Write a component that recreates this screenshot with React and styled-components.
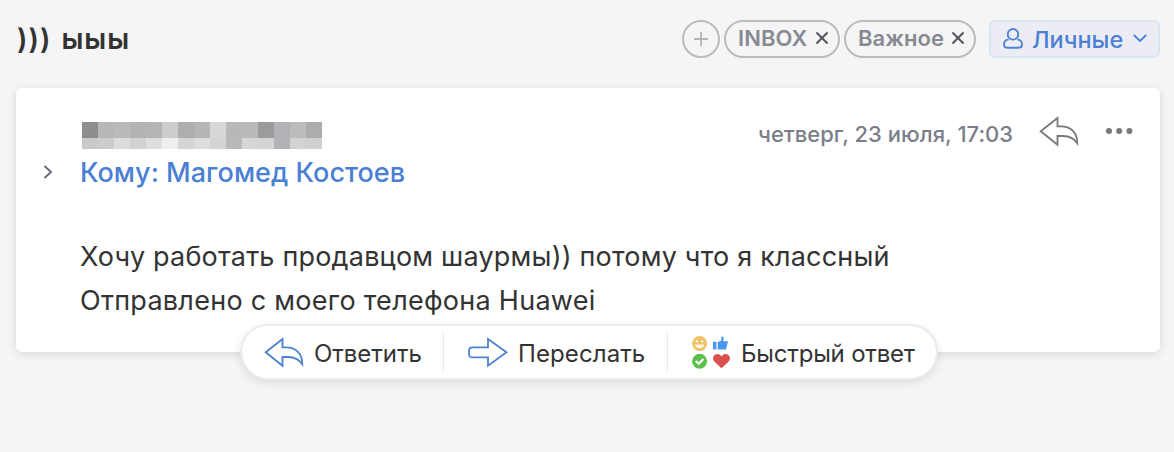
import React from "react";
import styled, { createGlobalStyle } from "styled-components";

const GlobalStyle = createGlobalStyle`
  * {
    box-sizing: border-box;
  }
  body {
    margin: 0;
    background: #f5f5f5;
    font-family: Inter, "Liberation Sans", sans-serif;
    color: #333;
  }
  svg {
    display: block;
    flex: none;
  }
`;

const Page = styled.div`
  height: 452px;
  padding: 0 14px 0 16px;
  overflow: hidden;
`;

const Header = styled.header`
  display: flex;
  align-items: flex-start;
  height: 88px;
  padding-top: 20px;
`;

const Title = styled.h1`
  flex: 1;
  margin: 0;
  padding-left: 1px;
  font-size: 28px;
  line-height: 38px;
  font-weight: 600;
  letter-spacing: 1px;
  word-spacing: 2px;
  white-space: nowrap;
`;

const Tag = styled.div`
  display: flex;
  align-items: center;
  justify-content: space-between;
  width: ${(p) => p.$width}px;
  height: 38px;
  margin-right: ${(p) => p.$gap || 4}px;
  padding: 0 9px 2px 12px;
  border: 2px solid #bbbcbf;
  border-radius: 19px;
`;

const TagLabel = styled.span`
  font-size: 22px;
  line-height: 30px;
  font-weight: 600;
  color: #878a93;
  letter-spacing: 0.1px;
  white-space: nowrap;
`;

const AddTag = styled.button`
  display: flex;
  align-items: center;
  justify-content: center;
  width: 38px;
  height: 38px;
  margin: 0 4px 0 0;
  padding: 0;
  border: 2px solid #bbbcbf;
  border-radius: 50%;
  background: none;
`;

const Category = styled.button`
  display: flex;
  align-items: center;
  width: 171px;
  height: 38px;
  padding: 0 11px 0 12px;
  border: 2px solid #dce4f1;
  border-radius: 6px;
  background: #ecedf4;
`;

const CategoryLabel = styled.span`
  flex: 1;
  padding: 2px 0 0 9px;
  text-align: left;
  font: 500 23.5px/34px Inter, sans-serif;
  color: #4d80d2;
  white-space: nowrap;
`;

const Card = styled.article`
  display: flex;
  height: 264px;
  width: 1144px;
  border-radius: 6px;
  background: #fff;
  box-shadow: 0 2px 8px rgba(0, 0, 0, 0.12);
`;

const Expander = styled.div`
  width: 64px;
  padding: 77px 0 0 27px;
`;

const Content = styled.div`
  flex: 1;
  padding-top: 34px;
`;

const Top = styled.div`
  display: flex;
  align-items: flex-start;
  height: 32px;
`;

const Mosaic = styled.div`
  display: grid;
  grid-template-columns: repeat(15, 16px);
  grid-template-rows: 16px 11px;
  flex: 1;
  padding-left: 2px;
`;

const Pixel = styled.i`
  background: ${(p) => p.$color};
`;

const DateText = styled.time`
  width: 281px;
  margin-top: -3px;
  font-size: 22px;
  line-height: 30px;
  font-weight: 500;
  color: #7a7e89;
  letter-spacing: 0.02px;
  white-space: nowrap;
`;

const ReplyTop = styled.div`
  width: 67px;
  margin-top: -6px;
`;

const More = styled.div`
  width: 54px;
  margin-top: 6px;
`;

const Recipient = styled.div`
  font-size: 27px;
  line-height: 38px;
  font-weight: 500;
  color: #4a7fd3;
  letter-spacing: 0.03px;
  white-space: nowrap;
`;

const Message = styled.div`
  padding-top: 43px;
`;

const Line = styled.p`
  margin: 0;
  font-size: 27px;
  line-height: 44px;
  letter-spacing: ${(p) => p.$spacing || 0}px;
  white-space: nowrap;
`;

const Actions = styled.div`
  position: relative;
  display: flex;
  align-items: center;
  width: 698px;
  height: 56px;
  margin: -28px 0 0 224px;
  border: 2px solid #ebebeb;
  border-radius: 28px;
  background: #fff;
  background-clip: padding-box;
  box-shadow: 0 3px 8px rgba(0, 0, 0, 0.1);
`;

const Action = styled.button`
  display: flex;
  align-items: center;
  width: ${(p) => p.$width}px;
  height: 40px;
  padding: 0 0 0 ${(p) => p.$left}px;
  border: 0;
  border-right: ${(p) => (p.$last ? "0" : "1px solid #e8e8e8")};
  background: none;
`;

const ActionLabel = styled.span`
  padding: 4px 0 0 10px;
  font: 400 24px/34px Inter, sans-serif;
  color: #333;
  letter-spacing: ${(p) => p.$spacing || 0}px;
  white-space: nowrap;
`;

const CrossIcon = () => (
  <svg width="14" height="14" viewBox="0 0 14 14">
    <path d="M1.5 1.5 12.5 12.5M12.5 1.5 1.5 12.5" stroke="#55565f" strokeWidth="2" />
  </svg>
);

const ReplyIcon = ({ color }) => (
  <svg width="40" height="31" viewBox="0 0 40 31" fill="none" stroke={color} strokeWidth="1.8">
    <path d="M18.5 2 1.7 15.2 18.5 28.8V20H24C30 20 34.5 21.5 38.3 27.3 38.3 16 31.5 10.4 22 10.4H18.5Z" />
  </svg>
);

const ForwardIcon = () => (
  <svg width="40" height="31" viewBox="0 0 40 31" fill="none" stroke="#4d82d3" strokeWidth="1.8">
    <path d="M20 2 38.5 15.3 20 28.8V20.4H4.5Q1 20.4 1 17V13.8Q1 10.3 4.5 10.3H20Z" />
  </svg>
);

const ReactionsIcon = () => (
  <svg width="39" height="33" viewBox="0 0 39 33">
    <circle cx="7.6" cy="7.6" r="7.5" fill="#efc56b" />
    <circle cx="5" cy="5.3" r="1.1" fill="#fff8e7" />
    <circle cx="10.3" cy="5.3" r="1.1" fill="#fff8e7" />
    <path d="M3.2 8.4H12Q11.4 12.2 7.6 12.2 3.9 12.2 3.2 8.4Z" fill="#fff8e7" />
    <path
      d="M21 5.8h3.4v7.7H21.5l-.5-.7ZM25.7 6.1 29.2 4.8 29.5.7Q31.9.1 31.7 3L31.2 5.3H36L34 13.5H25.7Z"
      fill="#4a98f0"
    />
    <circle cx="7.6" cy="25.3" r="7.5" fill="#5dc04d" />
    <path d="M3.8 25 6.7 27.8 11.4 23" fill="none" stroke="#fff" strokeWidth="2.2" />
    <path
      d="M29.5 32.3 22.3 25.5Q19.6 21.5 22.6 19 26.4 16.6 29.5 20.3 32.6 16.6 36.4 19 39.4 21.5 36.7 25.5Z"
      fill="#d9504f"
    />
  </svg>
);

const pixels = [
  "#8b8d8e", "#b7b7b8", "#bababa", "#b2b3b5", "#b4b5b7", "#cccdcf", "#adaeb0", "#b5b6b8",
  "#d7d9d8", "#b7b8ba", "#bababa", "#999b9d", "#b1b2b5", "#bcbcbc", "#abacae",
  "#c8c9c9", "#cccccc", "#dadddb", "#d2d2d2", "#dedede", "#eeeeee", "#d5d5d6", "#dddddd",
  "#d2d5d4", "#bababa", "#d5d7d6", "#d4d6d5", "#b2b3b6", "#d2d4d3", "#d0d0d0",
];

const App = () => {
  return (
    <>
      <GlobalStyle />
      <Page>
        <Header>
          <Title>))) ыыы</Title>
          <AddTag>
            <svg width="14" height="14" viewBox="0 0 14 14">
              <path d="M0 7H14M7 0V14" stroke="#b3b4b8" strokeWidth="1.8" />
            </svg>
          </AddTag>
          <Tag $width={116}>
            <TagLabel>INBOX</TagLabel>
            <CrossIcon />
          </Tag>
          <Tag $width={132} $gap={13}>
            <TagLabel>Важное</TagLabel>
            <CrossIcon />
          </Tag>
          <Category>
            <svg width="20" height="22" viewBox="0 0 20 22" fill="none" stroke="#4d82d8" strokeWidth="1.9">
              <circle cx="10" cy="6.3" r="5.3" />
              <path d="M5.5 11.4C2.5 11.9 1 13.6 1 16.4 1 18.8 2.6 19.8 5 19.8H15C17.4 19.8 19 18.8 19 16.4 19 13.6 17.5 11.9 14.5 11.4" />
            </svg>
            <CategoryLabel>Личные</CategoryLabel>
            <svg width="14" height="10" viewBox="0 0 14 10" fill="none">
              <path d="M.8 1 7 7 13.2 1" stroke="#4d82d8" strokeWidth="1.9" />
            </svg>
          </Category>
        </Header>

        <Card>
          <Expander>
            <svg width="10" height="14" viewBox="0 0 10 14" fill="none">
              <path d="M1.5 1 8 7 1.5 13" stroke="#656770" strokeWidth="1.8" />
            </svg>
          </Expander>
          <Content>
            <Top>
              <Mosaic>
                {pixels.map((color, i) => (
                  <Pixel key={i} $color={color} />
                ))}
              </Mosaic>
              <DateText>четверг, 23 июля, 17:03</DateText>
              <ReplyTop>
                <ReplyIcon color="#77787a" />
              </ReplyTop>
              <More>
                <svg width="27" height="6" viewBox="0 0 27 6" fill="#77787a">
                  <circle cx="3" cy="3" r="3" />
                  <circle cx="13.2" cy="3" r="3" />
                  <circle cx="23.4" cy="3" r="3" />
                </svg>
              </More>
            </Top>
            <Recipient>Кому: Магомед Костоев</Recipient>
            <Message>
              <Line $spacing={0.2}>Хочу работать продавцом шаурмы)) потому что я классный</Line>
              <Line $spacing={0.27}>Отправлено с моего телефона Huawei</Line>
            </Message>
          </Content>
        </Card>

        <Actions>
          <Action $width={202} $left={22}>
            <ReplyIcon color="#4d82d3" />
            <ActionLabel $spacing={-0.05}>Ответить</ActionLabel>
          </Action>
          <Action $width={224} $left={24}>
            <ForwardIcon />
            <ActionLabel $spacing={0.1}>Переслать</ActionLabel>
          </Action>
          <Action $width={268} $left={24} $last>
            <ReactionsIcon />
            <ActionLabel $spacing={-0.2}>Быстрый ответ</ActionLabel>
          </Action>
        </Actions>
      </Page>
    </>
  );
};

export default App;
